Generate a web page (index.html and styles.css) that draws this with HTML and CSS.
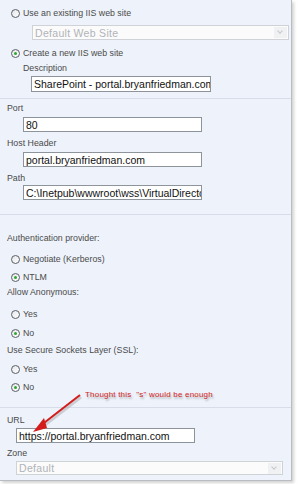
FILE: index.html
```html
<!DOCTYPE html>
<html lang="en">
<head>
    <meta charset="UTF-8">
    <meta name="viewport" content="width=device-width, initial-scale=1.0">
    <title>Create Web Application</title>
    <link rel="stylesheet" href="styles.css">
</head>
<body>
    <div class="panel">
        <div class="section first">
            <div class="option"><span class="radio"></span>Use an existing IIS web site</div>
            <div class="select site-select">Default Web Site<span class="drop"></span></div>
            <div class="option gap-create"><span class="radio checked"></span>Create a new IIS web site</div>
            <div class="label desc-label">Description</div>
            <div class="input desc-input">SharePoint - portal.bryanfriedman.com</div>
        </div>

        <div class="section second">
            <div class="label port-label">Port</div>
            <div class="input field">80</div>
            <div class="label host-label">Host Header</div>
            <div class="input field">portal.bryanfriedman.com</div>
            <div class="label path-label">Path</div>
            <div class="input field path-input">C:\Inetpub\wwwroot\wss\VirtualDirectories\portal.bryanfriedman.com80</div>
        </div>

        <div class="section third">
            <div class="label auth-label">Authentication provider:</div>
            <div class="option neg"><span class="radio"></span>Negotiate (Kerberos)</div>
            <div class="option ntlm"><span class="radio checked"></span>NTLM</div>
            <div class="label anon-label">Allow Anonymous:</div>
            <div class="option anon-yes"><span class="radio"></span>Yes</div>
            <div class="option anon-no"><span class="radio checked"></span>No</div>
            <div class="label ssl-label">Use Secure Sockets Layer (SSL):</div>
            <div class="option ssl-yes"><span class="radio"></span>Yes</div>
            <div class="option ssl-no"><span class="radio checked"></span>No</div>
        </div>

        <div class="section fourth">
            <div class="label url-label">URL</div>
            <div class="input url-input">https://portal.bryanfriedman.com</div>
            <div class="label zone-label">Zone</div>
            <div class="select zone-select">Default<span class="drop"></span></div>
        </div>

        <!-- annotation drawn over the screenshot -->
        <div class="note">Thought this &nbsp;"s" would be enough</div>
        <svg class="arrow" width="298" height="484" viewBox="0 0 298 484">
            <line x1="80" y1="395" x2="40" y2="426" stroke="#8a8a8a" stroke-opacity="0.35" stroke-width="3" transform="translate(1,2)"/>
            <line x1="80" y1="395" x2="40" y2="426" stroke="#d41c1c" stroke-width="2"/>
            <polygon points="33,432 44,418 47,428" fill="#d41c1c"/>
        </svg>
    </div>
</body>
</html>
```

FILE: styles.css
```css
* {
    margin: 0;
    padding: 0;
    box-sizing: border-box;
}

body {
    font-family: "Liberation Sans", Arial, sans-serif;
    font-size: 8.8px;
    color: #4a4a4a;
    background-color: #ffffff;
    width: 298px;
    height: 484px;
    overflow: hidden;
}

.panel {
    position: relative;
    width: 292px;
    height: 481px;
    background-color: #eef3fb;
    border-right: 1px solid #b8bcc3;
    border-bottom: 1px solid #b8bcc3;
    box-shadow: 2px 2px 3px rgba(0, 0, 0, 0.18);
    overflow: hidden;
}

.section {
    display: flow-root;
    border-bottom: 1px solid #d6dde8;
}

.first {
    height: 99px;
    padding: 6px 0 0 11px;
}

.second {
    height: 116px;
    padding-left: 7px;
}

.third {
    height: 193px;
    padding-left: 7px;
}

.fourth {
    border-bottom: none;
    padding-left: 7px;
}

.option,
.label {
    height: 14px;
    display: flex;
    align-items: center;
    white-space: nowrap;
}

.third .option {
    padding-left: 4px;
}

.radio {
    width: 9px;
    height: 9px;
    border: 1px solid #5b5f66;
    border-radius: 50%;
    background: linear-gradient(135deg, #e4e6ea, #ffffff);
    margin-right: 3px;
    display: flex;
    align-items: center;
    justify-content: center;
}

.radio.checked::after {
    content: "";
    width: 3px;
    height: 3px;
    border-radius: 50%;
    background-color: #2fa52f;
}

.input,
.select {
    height: 15px;
    display: flex;
    align-items: center;
    padding-left: 2px;
    white-space: nowrap;
    overflow: hidden;
    font-size: 10.5px;
}

.input {
    background-color: #ffffff;
    border: 1px solid #8e949c;
    color: #111;
}

.select {
    position: relative;
    background-color: #fbfbfb;
    border: 1px solid #cfd2d6;
    color: #b0b3b8;
    letter-spacing: 0.3px;
}

.drop {
    position: absolute;
    right: 1px;
    top: 1px;
    width: 13px;
    height: 11px;
    background-color: #f0f1f2;
}

.drop::after {
    content: "";
    position: absolute;
    left: 4px;
    top: 2px;
    width: 3px;
    height: 3px;
    border-right: 1px solid #c4c7cc;
    border-bottom: 1px solid #c4c7cc;
    transform: rotate(45deg);
}

.site-select {
    margin: 5px 0 0 21px;
    width: 257px;
}

.gap-create {
    margin-top: 6px;
}

.desc-label {
    margin-left: 12px;
    margin-top: 1px;
}

.desc-input {
    margin: 1px 0 0 20px;
    width: 180px;
    height: 16px;
}

.field {
    margin: 2px 0 0 16px;
    width: 179px;
}

.port-label {
    margin-top: 2px;
}

.host-label {
    margin-top: 4px;
}

.path-label {
    margin-top: 4px;
}

.path-input {
    margin-top: 0;
}

.auth-label {
    margin-top: 16px;
}

.neg {
    margin-top: 7px;
}

.ntlm {
    margin-top: 4px;
}

.anon-label {
    margin-top: 1px;
}

.anon-yes {
    margin-top: 8px;
}

.anon-no {
    margin-top: 5px;
}

.ssl-label {
    margin-top: 3px;
}

.ssl-yes {
    margin-top: 5px;
}

.ssl-no {
    margin-top: 4px;
}

.url-label {
    margin-top: 5px;
}

.url-input {
    margin: 1px 0 0 9px;
    width: 179px;
}

.zone-label {
    margin-top: 3px;
}

.zone-select {
    margin: 1px 0 0 9px;
    width: 267px;
    height: 14px;
}

.note {
    position: absolute;
    left: 85px;
    top: 390px;
    font-size: 8px;
    color: #d42424;
    letter-spacing: 0.2px;
    text-shadow: 1px 2px 2px rgba(0, 0, 0, 0.3);
    white-space: nowrap;
}

.arrow {
    position: absolute;
    left: 0;
    top: 0;
}
```
